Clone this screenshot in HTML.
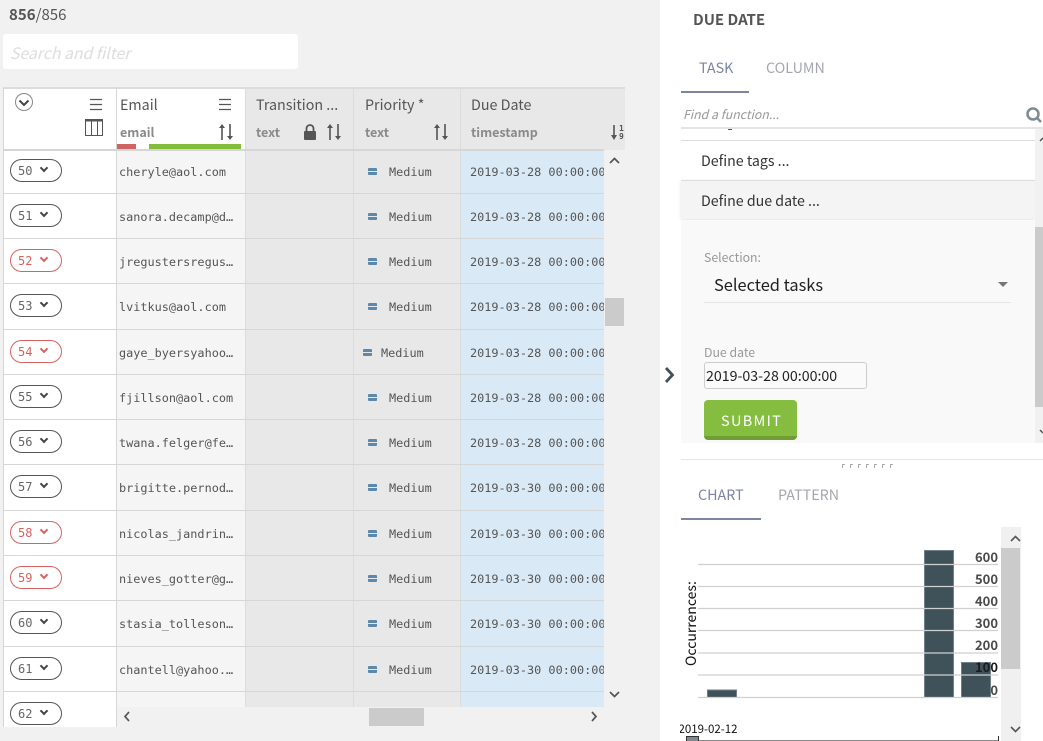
<!DOCTYPE html>
<html><head><meta charset="utf-8"><style>
html,body{margin:0;padding:0}
body{width:1043px;height:741px;overflow:hidden;background:#f1f1f1;position:relative;font-family:"Noto Sans CJK JP","Liberation Sans",sans-serif;color:#555}
.a{position:absolute;white-space:nowrap;line-height:1}
#tbl{position:absolute;left:3px;top:149px;width:601px;height:578px;overflow:hidden}
.r{position:relative;height:45px;box-sizing:border-box;border-bottom:1.5px solid #d6d6d6}
.r.b{height:46px}
.r span{position:absolute;top:0;bottom:0;box-sizing:border-box}
.p{left:0;width:114px;background:#fff;border-right:1px solid #d6d6d6;border-left:1px solid #d6d6d6}
.p i{position:absolute;left:6px;top:10px;width:52px;height:23px;box-sizing:border-box;border:1px solid #555;border-radius:11.500px;font:12px/22px "DejaVu Sans Mono",monospace;font-style:normal;padding-left:7px;color:#666}
.p i:after{content:"";position:absolute;left:30px;top:5px;width:4px;height:4px;border:solid #444;border-width:0 2px 2px 0;transform:rotate(45deg)}
.p i.w{border-color:#d9625f;color:#d9625f}
.p i.w:after{border-color:#d9625f}
.e{left:114px;width:129px;background:#f5f5f5;border-right:1px solid #dcdcdc;font:11.850px/46px "DejaVu Sans Mono",monospace;padding-left:2px;color:#555;white-space:nowrap;overflow:hidden}
.t{left:243px;width:108px;background:#e8e8e8;border-right:1px solid #dcdcdc}
.m{left:351px;width:107px;background:#e8e8e8;border-right:1px solid #dcdcdc;font:11.850px/46px "DejaVu Sans Mono",monospace;padding-left:35px;color:#555}
.m:before{content:"";position:absolute;left:14px;top:19px;width:9px;height:1px;border-top:3px solid #5d88ad;border-bottom:3px solid #5d88ad;border-radius:1px}
.m.x{padding-left:27px}
.m.x:before{left:9px}
.d{left:458px;width:143px;background:#d9e9f5;font:11.850px/46px "DejaVu Sans Mono",monospace;padding-left:9px;color:#555;white-space:nowrap;overflow:hidden}
.hc{position:absolute;top:87px;height:63px;box-sizing:border-box;border-top:2px solid #dcdcdc}
.ht{font-size:14.300px;color:#555}
.st{font-size:12.500px;font-weight:700;color:#8a8a8a}
</style></head><body>

<div class="a" style="left:9px;top:7px;font-size:15px;color:#555"><b>856</b>/856</div>
<div class="a" style="left:3px;top:34px;width:295px;height:35px;background:#fff;border-radius:3px"></div>
<div class="a" style="left:10px;top:45px;font-size:15.800px;font-style:italic;color:#ddd">Search and filter</div>

<div class="hc" style="left:3px;width:114px;background:#fff;border-right:1px solid #d6d6d6;border-left:1px solid #d6d6d6"></div>
<div class="hc" style="left:117px;width:129px;background:#fff;border-right:1px solid #dcdcdc"></div>
<div class="hc" style="left:246px;width:108px;background:#e8e8e8;border-right:1px solid #dcdcdc"></div>
<div class="hc" style="left:354px;width:107px;background:#e8e8e8;border-right:1px solid #dcdcdc"></div>
<div class="hc" style="left:461px;width:164px;background:#e8e8e8"></div>
<div class="a" style="left:117px;top:144px;width:19px;height:5px;background:#cf6361"></div>
<div class="a" style="left:149px;top:144px;width:92px;height:5px;background:#83bb3b"></div>

<div class="a ht" style="left:120px;top:98px">Email</div>
<div class="a st" style="left:120px;top:126px">email</div>
<div class="a ht" style="left:256px;top:98px">Transition ...</div>
<div class="a st" style="left:256px;top:126px">text</div>
<div class="a ht" style="left:365px;top:98px">Priority *</div>
<div class="a st" style="left:365px;top:126px">text</div>
<div class="a ht" style="left:471px;top:98px">Due Date</div>
<div class="a st" style="left:471px;top:126px">timestamp</div>

<svg class="a" style="left:0;top:85px" width="630" height="64" fill="none" stroke="#555">
<circle cx="24" cy="17" r="8.500" stroke="#888"/>
<path d="M19.500 15.500L24 20L28.500 15.500" stroke="#444" stroke-width="2"/>
<path d="M90 14.500H102M90 19.500H102M90 24.500H102" stroke="#555" stroke-width="1.200"/>
<path d="M219 14.500H231M219 19.500H231M219 24.500H231" stroke="#555" stroke-width="1.200"/>
<rect x="85.500" y="35.500" width="17" height="15" stroke-width="1"/>
<rect x="85" y="34" width="18" height="2.500" fill="#555" stroke="none"/>
<path d="M91.500 36V50M97.500 36V50" stroke-width="1"/>
<path d="M222 42V55M230 39V52" stroke-width="1.600"/><path d="M219 43L222 39L225 43ZM227 51L230 55L233 51Z" fill="#555" stroke="none"/>
<path d="M330 42V55M338 39V52" stroke-width="1.600"/><path d="M327 43L330 39L333 43ZM335 51L338 55L341 51Z" fill="#555" stroke="none"/>
<path d="M437 42V55M445 39V52" stroke-width="1.600"/><path d="M434 43L437 39L440 43ZM442 51L445 55L448 51Z" fill="#555" stroke="none"/>
<path d="M614 40V52" stroke-width="1.600"/><path d="M611 50L614 55L617 50Z" fill="#555" stroke="none"/>
<rect x="304" y="46" width="12" height="9" rx="1" fill="#555" stroke="none"/>
<path d="M306.500 46V43.500A3.500 3.500 0 0 1 313.500 43.500V46" stroke-width="1.800"/>
<text x="619" y="46" font-size="8" font-weight="700" fill="#555" stroke="none" font-family="DejaVu Sans Mono">1</text>
<text x="619" y="54" font-size="8" font-weight="700" fill="#555" stroke="none" font-family="DejaVu Sans Mono">9</text>
</svg>

<div id="tbl">
<div class="r"><span class="p"><i>50</i></span><span class="e">cheryle@aol.com</span><span class="t"></span><span class="m">Medium</span><span class="d">2019-03-28 00:00:00</span></div>
<div class="r"><span class="p"><i>51</i></span><span class="e">sanora.decamp@d…</span><span class="t"></span><span class="m">Medium</span><span class="d">2019-03-28 00:00:00</span></div>
<div class="r"><span class="p"><i class="w">52</i></span><span class="e">jregustersregus…</span><span class="t"></span><span class="m">Medium</span><span class="d">2019-03-28 00:00:00</span></div>
<div class="r b"><span class="p"><i>53</i></span><span class="e">lvitkus@aol.com</span><span class="t"></span><span class="m">Medium</span><span class="d">2019-03-28 00:00:00</span></div>
<div class="r"><span class="p"><i class="w">54</i></span><span class="e">gaye_byersyahoo…</span><span class="t"></span><span class="m x">Medium</span><span class="d">2019-03-28 00:00:00</span></div>
<div class="r"><span class="p"><i>55</i></span><span class="e">fjillson@aol.com</span><span class="t"></span><span class="m">Medium</span><span class="d">2019-03-28 00:00:00</span></div>
<div class="r"><span class="p"><i>56</i></span><span class="e">twana.felger@fe…</span><span class="t"></span><span class="m">Medium</span><span class="d">2019-03-28 00:00:00</span></div>
<div class="r b"><span class="p"><i>57</i></span><span class="e">brigitte.pernod…</span><span class="t"></span><span class="m">Medium</span><span class="d">2019-03-30 00:00:00</span></div>
<div class="r"><span class="p"><i class="w">58</i></span><span class="e">nicolas_jandrin…</span><span class="t"></span><span class="m">Medium</span><span class="d">2019-03-30 00:00:00</span></div>
<div class="r"><span class="p"><i class="w">59</i></span><span class="e">nieves_gotter@g…</span><span class="t"></span><span class="m">Medium</span><span class="d">2019-03-30 00:00:00</span></div>
<div class="r b"><span class="p"><i>60</i></span><span class="e">stasia_tolleson…</span><span class="t"></span><span class="m">Medium</span><span class="d">2019-03-30 00:00:00</span></div>
<div class="r"><span class="p"><i>61</i></span><span class="e">chantell@yahoo.…</span><span class="t"></span><span class="m">Medium</span><span class="d">2019-03-30 00:00:00</span></div>
<div class="r"><span class="p"><i>62</i></span><span class="e"></span><span class="t"></span><span class="t" style="left:351px;width:107px"></span><span class="d"></span></div>
</div>
<div class="a" style="left:3px;top:149px;width:601px;height:1.500px;background:#d6d6d6"></div>

<div class="a" style="left:117px;top:707px;width:488px;height:20px;background:#f1f1f1"></div>
<div class="a" style="left:369px;top:708px;width:55px;height:18px;background:#cbcbcb"></div>
<div class="a" style="left:605px;top:298px;width:19px;height:28px;background:#cbcbcb"></div>
<svg class="a" style="left:0;top:0" width="660" height="741" fill="none" stroke="#555" stroke-width="1.700">
<path d="M610 163L614.500 158.500L619 163"/>
<path d="M610 692L614.500 696.500L619 692"/>
<path d="M129 712L125 716.500L129 721"/>
<path d="M592 712L596 716.500L592 721"/>
</svg>

<!-- right panel -->
<div class="a" style="left:660px;top:0;width:383px;height:741px;background:#fff"></div>
<div class="a" style="left:693px;top:12px;font-size:15px;font-weight:700;color:#555">DUE DATE</div>
<div class="a" style="left:699px;top:61px;font-size:14.300px;color:#7c84a3">TASK</div>
<div class="a" style="left:766px;top:61px;font-size:14.300px;color:#a5a7b0">COLUMN</div>
<div class="a" style="left:681px;top:91px;width:68px;height:2px;background:#7c84a3"></div>
<div class="a" style="left:683px;top:108px;font-size:12.300px;font-style:italic;color:#999">Find a function...</div>
<svg class="a" style="left:1024px;top:106px" width="19" height="18" fill="none" stroke="#7e8a92" stroke-width="2.500"><circle cx="9" cy="8" r="5.500"/><path d="M13 12L17 16"/></svg>
<div class="a" style="left:681px;top:127px;width:362px;height:2px;background:#e4e4e4"></div>
<div class="a" style="left:728px;top:129px;width:4px;height:1px;background:#555"></div>
<div class="a" style="left:681px;top:140px;width:354px;height:1px;background:#ddd"></div>
<div class="a" style="left:701px;top:154px;font-size:14.200px;color:#333">Define tags ...</div>
<div class="a" style="left:681px;top:180px;width:354px;height:39px;background:#f4f4f4;border-top:1px solid #ddd;box-shadow:0 1px 3px rgba(0,0,0,.12);box-sizing:border-box"></div>
<div class="a" style="left:701px;top:194px;font-size:14.200px;color:#333">Define due date ...</div>
<div class="a" style="left:681px;top:220px;width:354px;height:223px;background:#f9f9f9"></div>
<div class="a" style="left:1035px;top:129px;width:8px;height:314px;background:#f1f1f1"></div>
<div class="a" style="left:1035px;top:227px;width:8px;height:180px;background:#cbcbcb"></div>
<svg class="a" style="left:1035px;top:129px" width="8" height="314" fill="none" stroke="#555" stroke-width="1.500"><path d="M5 12L8 9M5 301L8 304"/></svg>
<div class="a" style="left:704px;top:251px;font-size:12.300px;color:#999">Selection:</div>
<div class="a" style="left:714px;top:276px;font-size:16.400px;color:#222">Selected tasks</div>
<div class="a" style="left:704px;top:302px;width:307px;height:1px;background:#e6e6e6"></div>
<div class="a" style="left:998px;top:282px;border:5px solid transparent;border-top:5px solid #777;border-bottom:0"></div>
<div class="a" style="left:704px;top:346px;font-size:12.300px;color:#999">Due date</div>
<div class="a" style="left:704px;top:362px;width:163px;height:27px;box-sizing:border-box;background:#fafafa;border:1px solid #ccc;border-radius:3px"></div>
<div class="a" style="left:706px;top:369px;font-size:14.200px;color:#222">2019-03-28 00:00:00</div>
<div class="a" style="left:704px;top:400px;width:93px;height:40px;box-sizing:border-box;background:#84bd3f;border-bottom:4px solid #6f9f34;border-radius:4px"></div>
<div class="a" style="left:721px;top:414px;font-size:14.500px;letter-spacing:1.300px;color:#fff">SUBMIT</div>
<svg class="a" style="left:664px;top:366px" width="12" height="18" fill="none" stroke="#444f57" stroke-width="2.800"><path d="M2 2L8.500 9L2 16"/></svg>
<div class="a" style="left:681px;top:459px;width:362px;height:1px;background:#e6e6e6"></div>
<svg class="a" style="left:842px;top:464px" width="52" height="4" fill="none" stroke="#aaa"><path d="M.5 4V.5H3M8.500 4V.5H11M16.500 4V.5H19M24.500 4V.5H27M32.500 4V.5H35M40.500 4V.5H43M48.500 4V.5H51"/></svg>
<div class="a" style="left:698px;top:488px;font-size:14.300px;color:#7c84a3">CHART</div>
<div class="a" style="left:778px;top:488px;font-size:14.300px;color:#a5a7b0">PATTERN</div>
<div class="a" style="left:681px;top:518px;width:80px;height:2px;background:#7c84a3"></div>

<div class="a" style="left:1001px;top:527px;width:20px;height:214px;background:#f0f0f0"></div>
<div class="a" style="left:1001px;top:548px;width:19px;height:121px;background:#cbcbcb"></div>
<svg class="a" style="left:660px;top:510px" width="383" height="231" fill="none" font-family="Noto Sans CJK JP,Liberation Sans,sans-serif">
<path d="M351 31L355.500 26.500L360 31M351 217L355.500 221.500L360 217" stroke="#555" stroke-width="1.600"/>
<rect x="264.500" y="40.500" width="29" height="147" fill="#3f525a" stroke="#6f8088"/>
<rect x="301.500" y="152.500" width="29" height="35" fill="#3f525a" stroke="#6f8088"/>
<rect x="47.500" y="180" width="29" height="7.500" fill="#3f525a" stroke="#6f8088"/>
<path d="M38 54.500H338M38 76.500H338M38 98.500H338M38 120.500H338M38 143H338M38 165H338M38 187.500H338" stroke="#d0d0d0" stroke-width="1.200"/>
<g font-size="13" font-weight="700" fill="#4a4a4a" text-anchor="end">
<text x="338" y="52">600</text><text x="338" y="74">500</text><text x="338" y="96">400</text><text x="338" y="118">300</text><text x="338" y="140">200</text><text x="338" y="162" fill="#1c1c1c">100</text><text x="338" y="185">0</text>
</g>
<text transform="translate(36,156) rotate(-90)" font-size="14" fill="#111">Occurrences:</text>
<text x="18.500" y="223" font-size="11.500" fill="#111">2019-02-12</text>
<path d="M38 230.500H338" stroke="#888"/>
<rect x="26.500" y="226.500" width="12" height="6" fill="#7e8a92" stroke="#333"/>
<path d="M338.500 226V231" stroke="#333"/>
</svg>
<div class="a" style="left:660px;top:720px;width:20px;height:16px;background:#fff"></div>
</body></html>
